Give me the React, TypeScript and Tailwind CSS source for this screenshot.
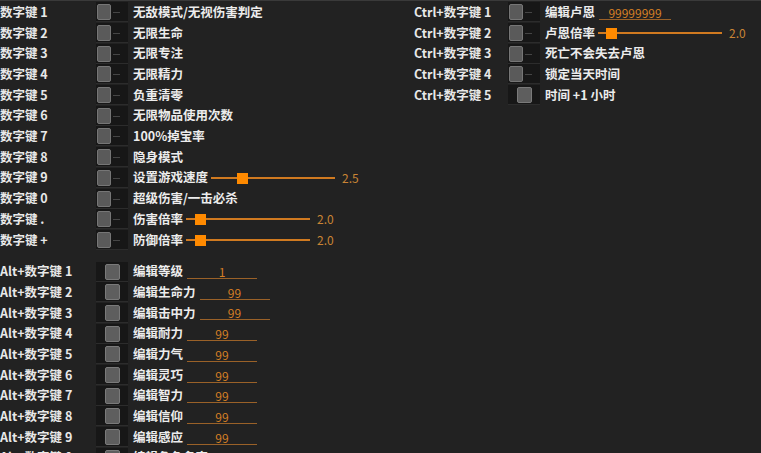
import React from "react";

type Row =
  | { key: string; text: string; kind: "toggle"; mid?: boolean }
  | { key: string; text: string; kind: "slider"; pos: number; value: string; mid?: boolean }
  | { key: string; text: string; kind: "input"; value: string; mid?: boolean };

const numRows: Row[] = [
  { key: "数字键 1", text: "无敌模式/无视伤害判定", kind: "toggle" },
  { key: "数字键 2", text: "无限生命", kind: "toggle" },
  { key: "数字键 3", text: "无限专注", kind: "toggle" },
  { key: "数字键 4", text: "无限精力", kind: "toggle" },
  { key: "数字键 5", text: "负重清零", kind: "toggle" },
  { key: "数字键 6", text: "无限物品使用次数", kind: "toggle" },
  { key: "数字键 7", text: "100%掉宝率", kind: "toggle" },
  { key: "数字键 8", text: "隐身模式", kind: "toggle" },
  { key: "数字键 9", text: "设置游戏速度", kind: "slider", pos: 26, value: "2.5" },
  { key: "数字键 0", text: "超级伤害/一击必杀", kind: "toggle" },
  { key: "数字键 .", text: "伤害倍率", kind: "slider", pos: 9, value: "2.0" },
  { key: "数字键 +", text: "防御倍率", kind: "slider", pos: 9, value: "2.0" },
];

const altRows: Row[] = [
  { key: "Alt+数字键 1", text: "编辑等级", kind: "input", value: "1", mid: true },
  { key: "Alt+数字键 2", text: "编辑生命力", kind: "input", value: "99", mid: true },
  { key: "Alt+数字键 3", text: "编辑击中力", kind: "input", value: "99", mid: true },
  { key: "Alt+数字键 4", text: "编辑耐力", kind: "input", value: "99", mid: true },
  { key: "Alt+数字键 5", text: "编辑力气", kind: "input", value: "99", mid: true },
  { key: "Alt+数字键 6", text: "编辑灵巧", kind: "input", value: "99", mid: true },
  { key: "Alt+数字键 7", text: "编辑智力", kind: "input", value: "99", mid: true },
  { key: "Alt+数字键 8", text: "编辑信仰", kind: "input", value: "99", mid: true },
  { key: "Alt+数字键 9", text: "编辑感应", kind: "input", value: "99", mid: true },
  { key: "Alt+数字键 0", text: "编辑角色名字", kind: "input", value: "", mid: true },
];

const ctrlRows: Row[] = [
  { key: "Ctrl+数字键 1", text: "编辑卢恩", kind: "input", value: "99999999" },
  { key: "Ctrl+数字键 2", text: "卢恩倍率", kind: "slider", pos: 8, value: "2.0" },
  { key: "Ctrl+数字键 3", text: "死亡不会失去卢恩", kind: "toggle" },
  { key: "Ctrl+数字键 4", text: "锁定当天时间", kind: "toggle" },
  { key: "Ctrl+数字键 5", text: "时间 +1 小时", kind: "toggle", mid: true },
];

function Toggle({ mid }: { mid?: boolean }) {
  return (
    <div className="relative h-[20px] w-[32px] shrink-0 bg-[#171717] border-b border-[#2c2c2c]">
      {mid ? (
        <div className="absolute left-[9px] top-[2px] h-[16px] w-[15px] rounded-[2px] bg-[#5e5e5e] border border-[#7a7a7a]" />
      ) : (
        <>
          <div className="absolute left-[1px] top-[2px] h-[16px] w-[14px] rounded-[2px] bg-[#5a5a5a] border border-[#767676]" />
          <div className="absolute left-[17px] top-[10px] h-px w-[7px] bg-[#454545]" />
        </>
      )}
    </div>
  );
}

function Slider({ pos, value }: { pos: number; value: string }) {
  return (
    <div className="ml-[3px] flex items-center">
      <div className="relative h-[12px] w-[124px]">
        <div className="absolute left-0 right-0 top-[5px] h-[2px] bg-[#d07a20]" />
        <div
          className="absolute top-[1px] h-[11px] w-[11px] bg-[#ff8a00]"
          style={{ left: pos }}
        />
      </div>
      <span className="ml-[7px] text-[12px] text-[#c98435]">{value}</span>
    </div>
  );
}

function Input({ value, w }: { value: string; w: number }) {
  return (
    <div
      className="ml-[4px] h-[15px] border-b border-[#9a6128] text-center text-[12px] leading-[15px] text-[#d47f25]"
      style={{ width: w }}
    >
      {value}
    </div>
  );
}

function RowView({ r, labelW, inputW }: { r: Row; labelW: number; inputW: number }) {
  return (
    <div className="flex h-[20.7px] items-center">
      <div className="shrink-0 text-[12.5px] font-semibold text-[#e8e8e8] whitespace-nowrap" style={{ width: labelW }}>
        {r.key}
      </div>
      <Toggle mid={r.mid} />
      <div className="ml-[5px] text-[12.5px] font-semibold text-[#ececec] whitespace-nowrap">{r.text}</div>
      {r.kind === "slider" && <Slider pos={r.pos} value={r.value} />}
      {r.kind === "input" && <Input value={r.value} w={inputW} />}
    </div>
  );
}

export default function App() {
  return (
    <div
      className="h-[453px] w-[761px] overflow-hidden bg-[#222222] border-t border-[#3a3a3a]"
      style={{ fontFamily: '"Noto Sans CJK SC", "Noto Sans", sans-serif' }}
    >
      <div className="flex pt-[1px]">
        <div className="w-[414px] shrink-0">
          {numRows.map((r) => (
            <RowView key={r.key} r={r} labelW={96} inputW={70} />
          ))}
          <div className="h-[11px]" />
          {altRows.map((r) => (
            <RowView key={r.key} r={r} labelW={96} inputW={70} />
          ))}
        </div>
        <div className="flex-1">
          {ctrlRows.map((r) => (
            <RowView key={r.key} r={r} labelW={94} inputW={72} />
          ))}
        </div>
      </div>
    </div>
  );
}
